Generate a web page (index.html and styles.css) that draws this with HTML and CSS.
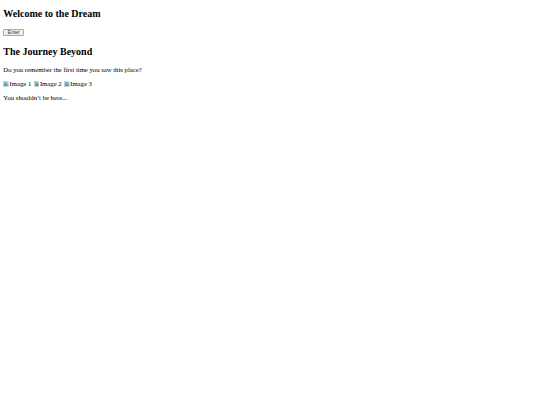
FILE: index.html
```html
<!DOCTYPE html>
<html lang="en">
<head>
<meta charset="utf-8">
<title>Welcome to the Dream</title>
<link rel="stylesheet" href="styles.css">
</head>
<body>
<h1 class="title">Welcome to the Dream</h1>
<div class="enter-row"><button class="enter-btn" type="button">Enter</button></div>
<h2 class="subtitle">The Journey Beyond</h2>
<p class="text">Do you remember the first time you saw this place?</p>
<div class="gallery">
<span class="broken"><svg class="broken-icon" viewBox="0 0 16 16" aria-hidden="true"><path d="M1 1h10l4 4v10H1z" fill="#e9f2fb" stroke="#8a9aa8" stroke-width="1.2"/><rect x="2.5" y="3" width="10" height="10" fill="#6fa8dc"/><path d="M2.5 13l4-5 3 3 2-2 1 1v3z" fill="#3f9b3f"/><circle cx="10" cy="5.5" r="1.3" fill="#f2e7a0"/></svg>Image 1</span>
<span class="broken"><svg class="broken-icon" viewBox="0 0 16 16" aria-hidden="true"><path d="M1 1h10l4 4v10H1z" fill="#e9f2fb" stroke="#8a9aa8" stroke-width="1.2"/><rect x="2.5" y="3" width="10" height="10" fill="#6fa8dc"/><path d="M2.5 13l4-5 3 3 2-2 1 1v3z" fill="#3f9b3f"/><circle cx="10" cy="5.5" r="1.3" fill="#f2e7a0"/></svg>Image 2</span>
<span class="broken"><svg class="broken-icon" viewBox="0 0 16 16" aria-hidden="true"><path d="M1 1h10l4 4v10H1z" fill="#e9f2fb" stroke="#8a9aa8" stroke-width="1.2"/><rect x="2.5" y="3" width="10" height="10" fill="#6fa8dc"/><path d="M2.5 13l4-5 3 3 2-2 1 1v3z" fill="#3f9b3f"/><circle cx="10" cy="5.5" r="1.3" fill="#f2e7a0"/></svg>Image 3</span>
</div>
<p class="text">You shouldn’t be here...</p>
</body>
</html>
```
FILE: styles.css
```css
html {
  background: #fff;
}
body {
  margin: 0;
  padding: 0 3.3px;
  font-family: "Liberation Serif", "Times New Roman", serif;
  color: #000;
}
.title {
  font-size: 10px;
  line-height: 11.5px;
  font-weight: bold;
  margin: 8.3px 0 9.2px;
}
.enter-row {
  height: 7px;
}
.enter-btn {
  display: block;
  box-sizing: border-box;
  height: 7px;
  width: 21px;
  padding: 0;
  margin: 0;
  border: 1px solid #a9a9a9;
  border-radius: 1px;
  background: #efefef;
  color: #333;
  font-family: "Liberation Sans", Arial, sans-serif;
  font-size: 5px;
  line-height: 5px;
  text-align: center;
}
.subtitle {
  font-size: 10px;
  line-height: 11.5px;
  font-weight: bold;
  margin: 9.8px 0 8.6px;
}
.text {
  font-size: 6.7px;
  line-height: 7.7px;
  margin: 6.4px 0;
}
.gallery {
  font-size: 6.7px;
  line-height: 7.7px;
  margin: 6.4px 0;
}
.broken-icon {
  display: inline-block;
  width: 5.8px;
  height: 5.8px;
  margin-right: 0.5px;
  vertical-align: -0.6px;
}
.broken {
  margin-right: 0.6px;
}
```
